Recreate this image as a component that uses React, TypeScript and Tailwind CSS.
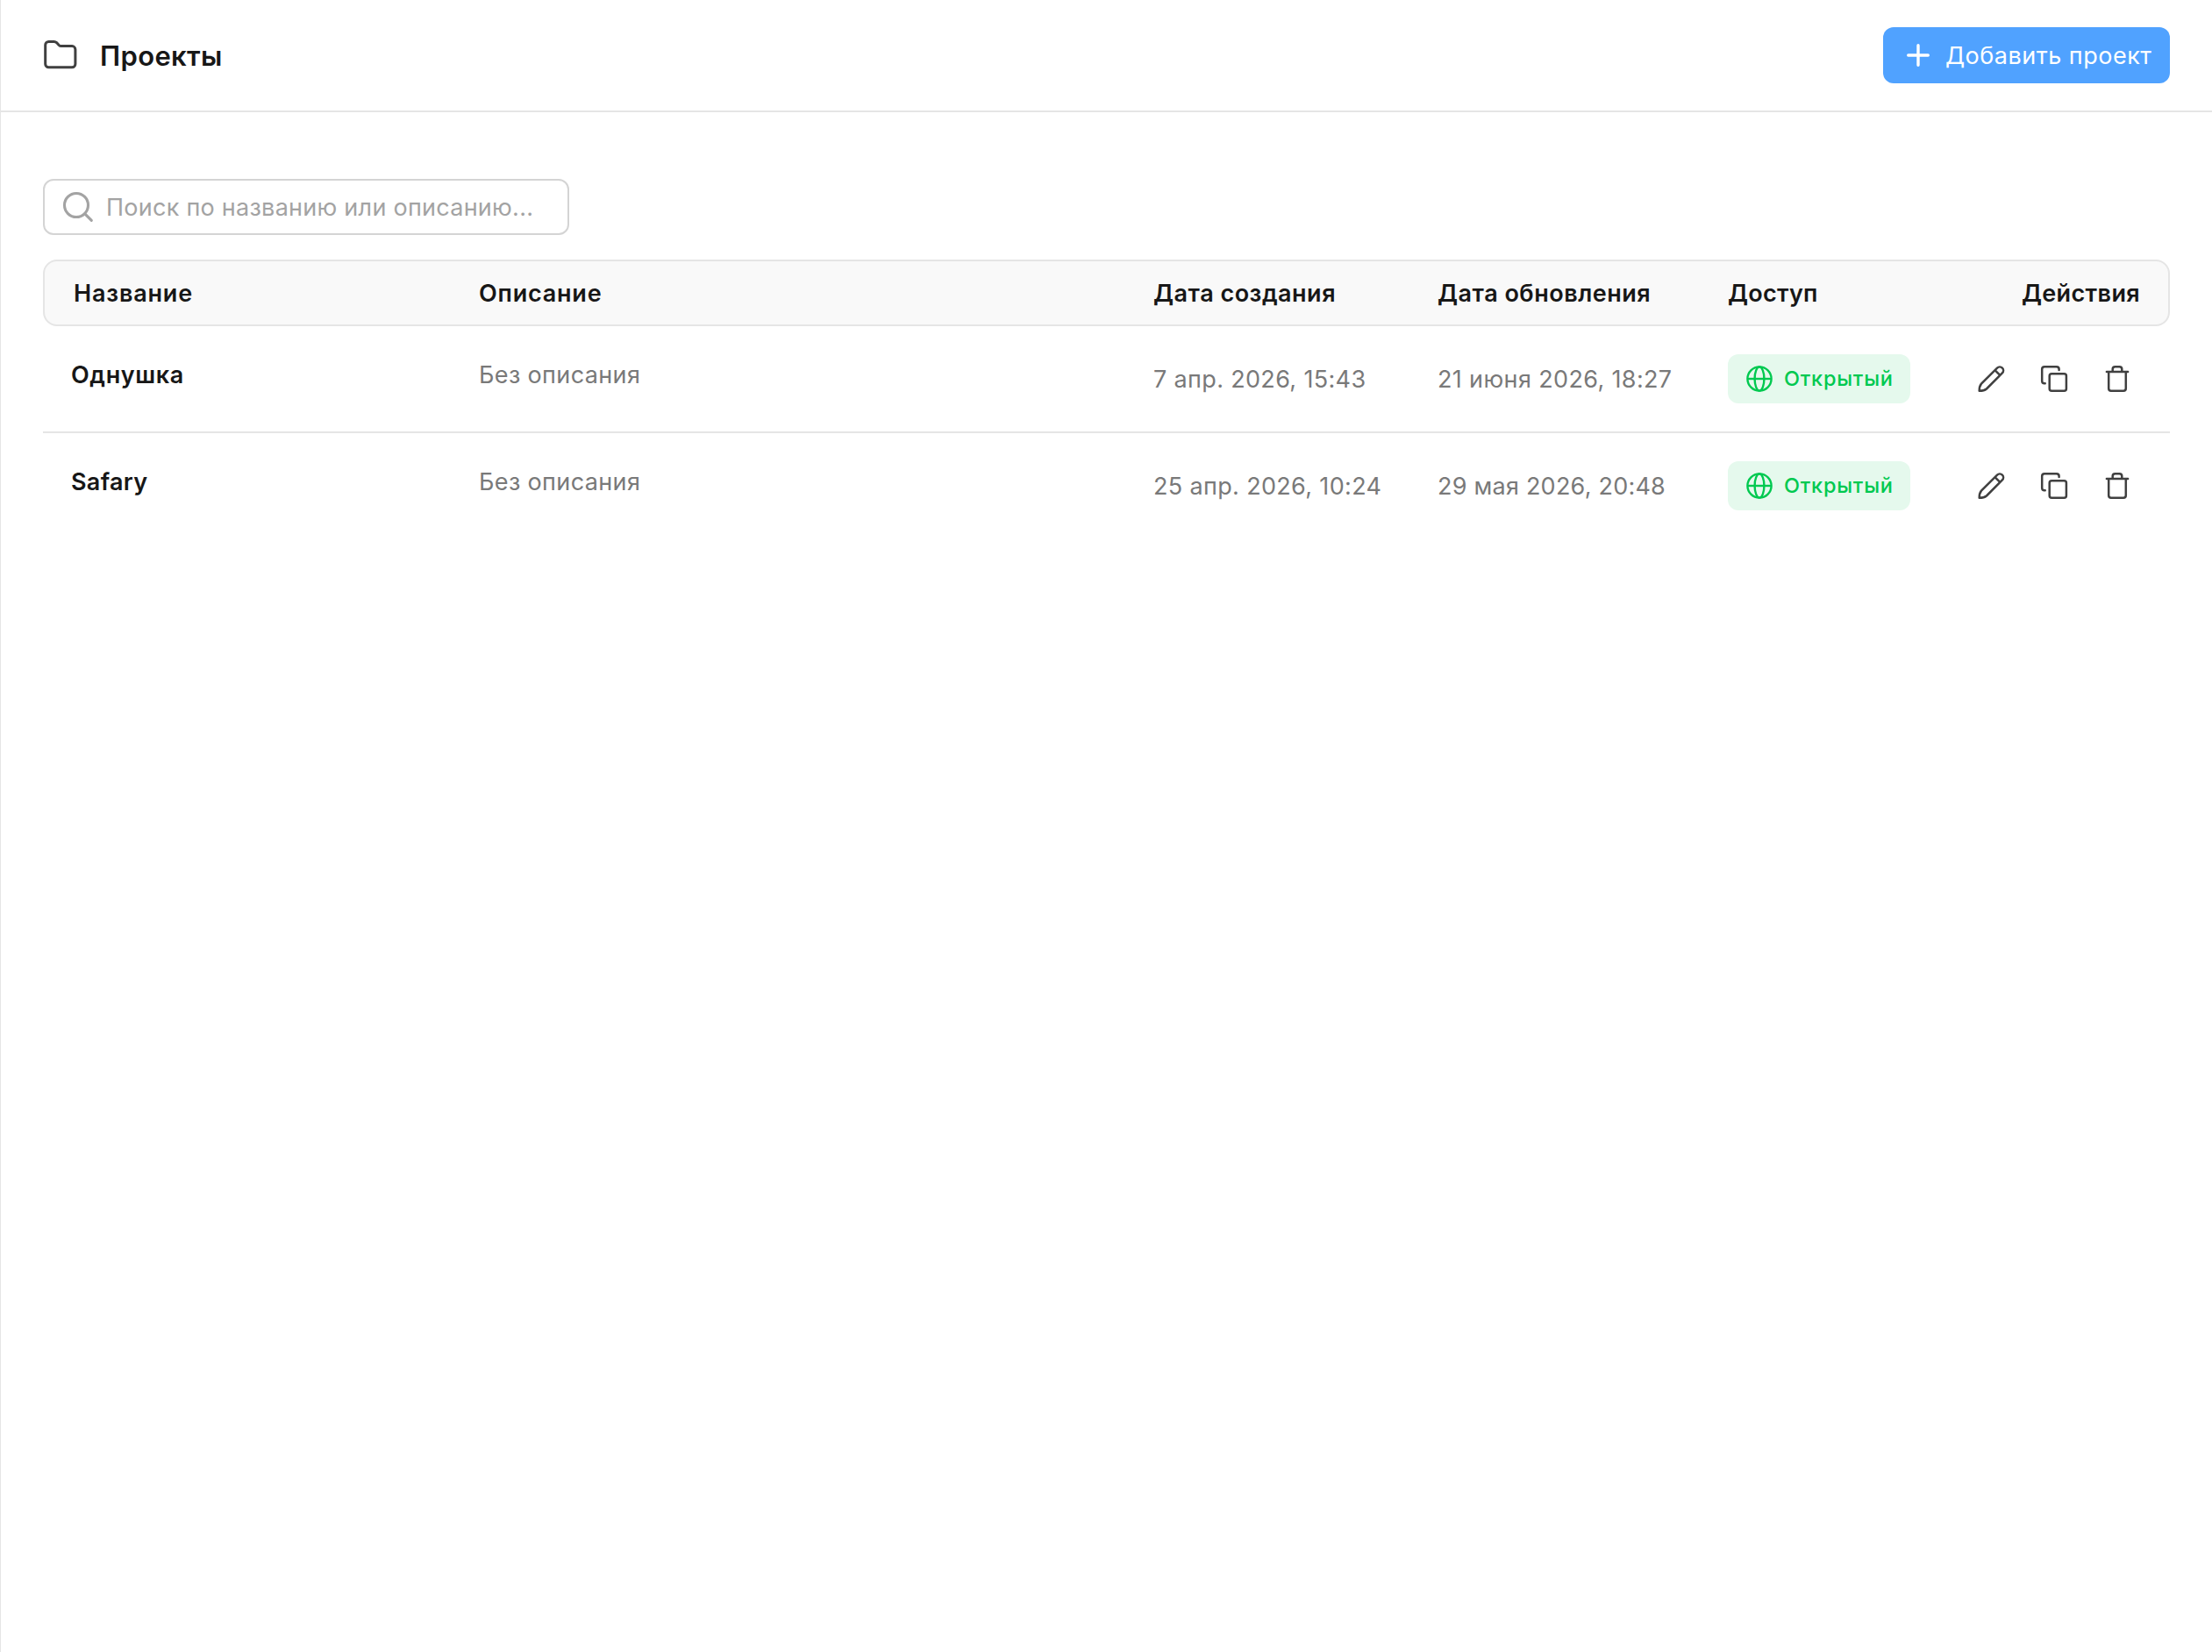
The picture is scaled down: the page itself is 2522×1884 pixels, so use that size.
function FolderIcon() {
  return (
    <svg className="size-10 shrink-0" viewBox="49 43 40 40" fill="none" stroke="#404040" strokeWidth="3" strokeLinejoin="round">
      <path d="M51.7 51.2a3.8 3.8 0 0 1 3.8-3.8h6.1c1.1 0 2.1.4 2.9 1.2l2.7 2.9c.7.7 1.6 1.1 2.6 1.1h12.3a3.8 3.8 0 0 1 3.8 3.8v16.6a3.8 3.8 0 0 1-3.8 3.8H55.5a3.8 3.8 0 0 1-3.8-3.8z" />
    </svg>
  )
}

function PlusIcon() {
  return (
    <svg className="size-10 shrink-0" viewBox="0 0 40 40" fill="none" stroke="currentColor" strokeWidth="3.4" strokeLinecap="round">
      <path d="M20 8.7v22.6M8.7 20h22.6" />
    </svg>
  )
}

function SearchIcon() {
  return (
    <svg className="size-10 shrink-0" viewBox="69 216 40 40" fill="none" stroke="#a3a3a3" strokeWidth="3.1" strokeLinecap="round">
      <circle cx="87" cy="234" r="13.5" />
      <path d="m96.8 243.8 7.5 7.5" />
    </svg>
  )
}

function GlobeIcon() {
  return (
    <svg className="size-8 shrink-0" viewBox="0 0 32 32" fill="none" stroke="currentColor" strokeWidth="2.4">
      <circle cx="16" cy="16" r="13.6" />
      <ellipse cx="16" cy="16" rx="5.4" ry="13.6" />
      <path d="M2.4 16h27.2" />
    </svg>
  )
}

function PencilIcon() {
  return (
    <svg className="size-10" viewBox="0 2 40 40" fill="none" stroke="currentColor" strokeWidth="2.5" strokeLinecap="round" strokeLinejoin="round">
      <path d="M27.1 9.6a4.1 4.1 0 0 1 5.8 5.8L14.9 33.5c-2 1.7-5 2.3-8.2 2.3 0-3.2.6-6.2 2.3-8.2zM24.7 12.3l5.6 5.6" />
    </svg>
  )
}

function CopyIcon() {
  return (
    <svg className="size-10" viewBox="0 2 40 40" fill="none" stroke="currentColor" strokeWidth="2.5" strokeLinecap="round" strokeLinejoin="round">
      <rect x="14.7" y="16.2" width="19.2" height="19.5" rx="2.5" />
      <path d="M25.6 12v-.9a2.8 2.8 0 0 0-2.8-2.8H9a2.8 2.8 0 0 0-2.800 2.800v13.400A2.800 2.800 0 0 0 9 27.300h.7" />
    </svg>
  )
}

function TrashIcon() {
  return (
    <svg className="size-10" viewBox="0 2 40 40" fill="none" stroke="currentColor" strokeWidth="2.5" strokeLinecap="round" strokeLinejoin="round">
      <path d="M7.9 14h24.2M10.2 14v19a2.7 2.7 0 0 0 2.7 2.7h14.2a2.7 2.7 0 0 0 2.7-2.7V14M14.7 14v-2.9a2.8 2.8 0 0 1 2.8-2.8h5a2.8 2.8 0 0 1 2.8 2.8V14" />
    </svg>
  )
}

const projects = [
  {
    name: 'Однушка',
    nameTracking: 'tracking-[0.62px]',
    created: '7 апр. 2026, 15:43',
    updated: '21 июня 2026, 18:27',
    updatedTracking: 'tracking-[0.36px]',
  },
  {
    name: 'Safary',
    nameTracking: 'tracking-[0.3px]',
    created: '25 апр. 2026, 10:24',
    updated: '29 мая 2026, 20:48',
    updatedTracking: 'tracking-[0.23px]',
  },
]

export default function App() {
  return (
    <div className="min-h-[1884px] border-l border-[#e5e5e5] bg-white font-['Inter',sans-serif] text-[27px] whitespace-nowrap text-[#171717]">
      <header className="flex h-32 items-center justify-between border-b-2 border-[#e5e5e5] px-12">
        <div className="flex items-center gap-6">
          <FolderIcon />
          <h1 className="pt-[3px] pl-px text-[31px] font-semibold tracking-[0.35px]">Проекты</h1>
        </div>
        <button className="flex h-16 w-[327px] items-center gap-[11px] rounded-xl bg-[#50a2ff] pl-5 tracking-[0.5px] text-white">
          <PlusIcon />
          <span className="pt-0.5">Добавить проект</span>
        </button>
      </header>

      <main className="px-12 pt-[76px]">
        <label className="flex h-16 w-[600px] items-center gap-3 rounded-xl border-2 border-[#d4d4d4] px-[18px]">
          <SearchIcon />
          <input
            className="w-full bg-transparent pt-0.5 tracking-[0.26px] outline-none placeholder:text-[#a3a3a3]"
            placeholder="Поиск по названию или описанию..."
          />
        </label>

        <div className="mt-7 grid h-[76px] grid-cols-[463px_769px_324px_331px_1fr] items-center rounded-2xl border-2 border-[#e5e5e5] bg-[#f9f9f9] px-8 pt-0.5 font-semibold">
          <div className="pl-px tracking-[0.82px]">Название</div>
          <div className="tracking-[0.78px]">Описание</div>
          <div className="tracking-[0.5px]">Дата создания</div>
          <div className="tracking-[0.5px]">Дата обновления</div>
          <div className="flex justify-between">
            <span className="tracking-[0.25px]">Доступ</span>
            <span className="tracking-[0.35px]">Действия</span>
          </div>
        </div>

        <div className="divide-y-2 divide-[#e5e5e5]">
          {projects.map((p) => (
            <div key={p.name} className="grid grid-cols-[465px_769px_324px_331px_1fr] items-center py-8 pl-8 text-[#797979]">
              <div className={`self-start font-semibold leading-[48px] text-[#171717] ${p.nameTracking}`}>{p.name}</div>
              <div className="self-start leading-[48px] tracking-[0.36px]">Без описания</div>
              <div className="pt-0.5 tracking-[0.34px]">{p.created}</div>
              <div className={`pt-0.5 ${p.updatedTracking}`}>{p.updated}</div>
              <div className="flex items-center justify-between pr-10">
                <span className="flex h-14 w-52 items-center gap-3 rounded-xl bg-[#e5f9ed] pl-5 text-[23.5px] font-medium tracking-[0.75px] text-[#00c950]">
                  <GlobeIcon />
                  Открытый
                </span>
                <div className="flex gap-8 text-[#404040]">
                  <PencilIcon />
                  <CopyIcon />
                  <TrashIcon />
                </div>
              </div>
            </div>
          ))}
        </div>
      </main>
    </div>
  )
}
